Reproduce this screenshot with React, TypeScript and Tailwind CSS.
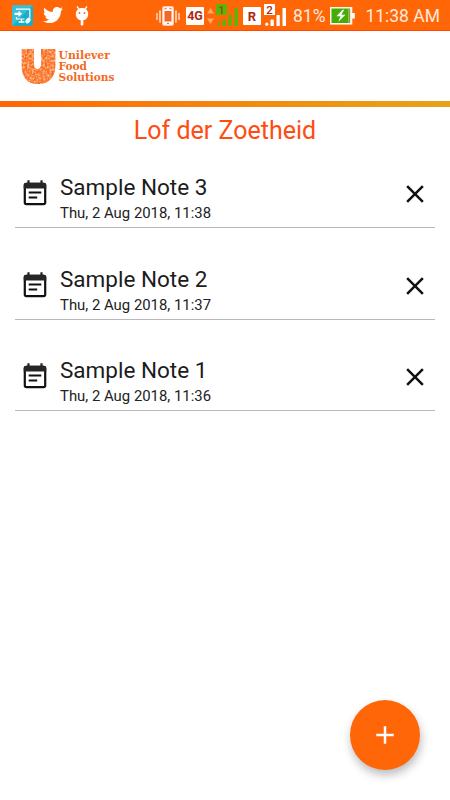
import React from 'react';
import { MdAdd, MdClose } from 'react-icons/md';
import { FaTwitter } from 'react-icons/fa';

interface Note {
  id: number;
  title: string;
  date: string;
}

const notes: Note[] = [
  { id: 3, title: 'Sample Note 3', date: 'Thu, 2 Aug 2018, 11:38' },
  { id: 2, title: 'Sample Note 2', date: 'Thu, 2 Aug 2018, 11:37' },
  { id: 1, title: 'Sample Note 1', date: 'Thu, 2 Aug 2018, 11:36' },
];

const U_SHAPE = 'M.7 0h12.300v15c0 3.500 1 5 3.500 5s3.500-1.500 3.500-5V0h14.300v17c0 11-6.300 18-17.300 18S.7 28 .7 17z';

const PcLinkIcon = () => (
  <svg width="21" height="21" viewBox="0 0 21 21" fill="none">
    <rect width="21" height="21" rx="1.5" fill="#18afc6" />
    <path d="M0 1.5A1.5 1.5 0 0 1 1.5 0H21L0 21z" fill="#38bfd2" />
    <path d="M4.500 5V4.200h13.300v8.500M4.500 12v2h8" stroke="#fff" strokeWidth="1.200" />
    <path d="M2.500 7.700h4V5.700l3.700 3.100-3.700 3.100V9.900h-4z" fill="#fff" />
    <path d="M9.500 14v2.500M6.500 17h6" stroke="#fff" strokeWidth="1.300" />
    <ellipse cx="16" cy="15.500" rx="2.200" ry="3.300" transform="rotate(35 16 15.500)" fill="#e8fbff" />
  </svg>
);

const DebugIcon = () => (
  <svg width="14" height="20" viewBox="0 0 14 20" fill="#fff">
    <path d="M2 .5 4 3.200M12 .5 10 3.200" stroke="#fff" strokeWidth="1.300" />
    <path d="M7 2C3 2 .8 4.700.8 8c0 3.700 2.700 6.500 6.200 6.500s6.200-2.800 6.200-6.500C13.200 4.700 11 2 7 2z" />
    <rect x="5.700" y="14" width="2.700" height="5.500" rx=".8" />
    <circle cx="4.500" cy="7" r=".9" fill="#ff6608" />
    <circle cx="9.500" cy="7" r=".9" fill="#ff6608" />
  </svg>
);

const VibrateIcon = () => (
  <svg width="24" height="20" viewBox="0 0 24 20" fill="none" stroke="#ffe9dc">
    <rect x="7" y="1" width="10" height="18" rx="1" strokeWidth="1.500" fill="#fff" />
    <rect x="8.500" y="5" width="7" height="10.500" fill="#f2672a" stroke="none" />
    <path d="M8.500 2.700h2M13.500 2.700h2M11 17.400h2" stroke="#e85b20" strokeWidth="1" />
    <path d="M4 4.500v12M20 4.500v12" strokeWidth="1.500" />
    <path d="M1 7v7M23 7v7" strokeWidth="1.300" />
  </svg>
);

const NetworkBadge = ({ label, className }: { label: string; className: string }) => (
  <span className={`flex h-[18px] items-center justify-center rounded-[1px] bg-white font-bold leading-none text-[#b02a12] ${className}`}>
    {label}
  </span>
);

const SignalIcon = ({ sim, color, box, digit }: { sim: string; color: string; box: string; digit: string }) => (
  <svg width="23" height="23" viewBox="0 0 23 23" fill={color}>
    <rect width="11" height="11" fill={box} />
    <text x="5.500" y="9.700" textAnchor="middle" fontSize="11.500" fontWeight="500" fill={digit}>{sim}</text>
    <circle cx="2.800" cy="20.200" r="1.600" />
    <rect x="6.500" y="15.500" width="3.300" height="6.500" rx=".5" />
    <rect x="12.500" y="11" width="3.300" height="11" rx=".5" />
    <rect x="18.500" y="4" width="3.500" height="18" rx=".5" />
  </svg>
);

const BatteryIcon = () => (
  <svg width="25" height="18" viewBox="0 0 25 18">
    <rect x=".8" y=".8" width="20.700" height="16" fill="#fff" stroke="#fff4ea" strokeWidth="1.600" />
    <rect x="22" y="6" width="2.800" height="5.500" fill="#fff" />
    <rect x="1.500" y="1.500" width="17" height="14.500" fill="#45ad08" />
    <rect x="18.500" y="1.500" width="1.700" height="14.500" fill="#8b9d35" />
    <path d="M12.500 2.800 6.500 9.300h4l-2.200 5.400 7.200-7h-4.200l3-4.900z" fill="#fff" />
  </svg>
);

const StatusBar = () => (
  <div className="flex h-[31px] shrink-0 items-center border-b border-[#ff4800] bg-[#ff6608] text-white">
    <div className="ml-3"><PcLinkIcon /></div>
    <FaTwitter className="ml-[10px]" size={20} />
    <div className="ml-[12px] mt-[2px]"><DebugIcon /></div>
    <div className="ml-[67px] mt-px"><VibrateIcon /></div>
    <NetworkBadge label="4G" className="ml-[6px] mt-[2px] w-[18px] text-[12.500px]" />
    <svg className="ml-[3px] mt-px" width="7" height="16" viewBox="0 0 7 16" fill="#ffa568">
      <path d="M3.500 0 7 5.500H0zM3.500 16 7 10.500H0z" />
    </svg>
    <div className="ml-[2px] mt-px"><SignalIcon sim="1" color="#5bb408" box="#5bb408" digit="#8d4d0b" /></div>
    <NetworkBadge label="R" className="ml-[4px] mt-[2px] w-[18px] text-[13px]" />
    <div className="ml-[3px] mt-px"><SignalIcon sim="2" color="#fff" box="#fff" digit="#b02a12" /></div>
    <span className="ml-[6px] mt-[3px] w-[34px] whitespace-nowrap text-[17.500px] leading-none text-[#ffe9dd]">81%</span>
    <div className="ml-[3px] mt-[2px]"><BatteryIcon /></div>
    <span className="ml-auto mr-[10px] mt-[3px] whitespace-nowrap text-[17.500px] leading-none text-[#ffe9dd]">11:38 AM</span>
  </div>
);

const Logo = () => (
  <svg className="overflow-visible" width="110" height="40" viewBox="0 0 110 40">
    <filter id="swirls" x="0" y="0" width="100%" height="100%" colorInterpolationFilters="sRGB">
      <feTurbulence type="fractalNoise" baseFrequency="0.45" numOctaves="2" seed="4" />
      <feColorMatrix values="0 0 0 0 0.98  0 0 0 0 0.43  0 0 0 0 0.12  3 0 0 0 -0.85" />
      <feComposite in2="SourceGraphic" operator="in" />
    </filter>
    <path d={U_SHAPE} fill="#fdb68c" />
    <path d={U_SHAPE} fill="#fb6d20" filter="url(#swirls)" />
    <g fill="#f46a20" fontFamily="'DejaVu Serif', serif" fontWeight="700" fontSize="11">
      <text x="37.500" y="9.500" textLength="51.500" lengthAdjust="spacingAndGlyphs">Unilever</text>
      <text x="37.500" y="20.700" textLength="28.500" lengthAdjust="spacingAndGlyphs">Food</text>
      <text x="37.500" y="32" textLength="56" lengthAdjust="spacingAndGlyphs">Solutions</text>
    </g>
  </svg>
);

const NoteIcon = () => (
  <svg className="mt-[12px] shrink-0" width="30" height="30" viewBox="0 0 30 30" fill="none">
    <rect x="4.800" y="4.800" width="20.400" height="20.400" rx="1.600" stroke="#111" strokeWidth="2.200" />
    <path d="M3.700 9.500V6A2.300 2.300 0 0 1 6 3.700h18A2.300 2.300 0 0 1 26.300 6v3.500z" fill="#262626" />
    <path d="M8.500 1.300v3M21.500 1.300v3" stroke="#222" strokeWidth="2.200" />
    <path d="M8.700 13.500h12.600M8.700 18.500h8.500" stroke="#111" strokeWidth="2.100" />
  </svg>
);

const NoteRow: React.FC<{ note: Note }> = ({ note }) => (
  <li className="flex h-[61px] items-start border-b border-[#b9b9b9] px-[5px]">
    <NoteIcon />
    <div className="ml-[10px] grow">
      <p className="mt-[5px] text-[22.500px] leading-[30px] text-[#1c1c1c]">{note.title}</p>
      <p className="mt-px text-[14.900px] leading-5 text-[#222]">{note.date}</p>
    </div>
    <button className="mt-[12px] shrink-0 text-[#111]" aria-label="Delete note">
      <MdClose size={30} />
    </button>
  </li>
);

const App: React.FC = () => {
  return (
    <div className="relative flex h-screen w-full flex-col overflow-hidden bg-white font-['Roboto',sans-serif]">
      <StatusBar />
      <header className="h-[70px] shrink-0 pl-[21px] pt-[18px]">
        <Logo />
      </header>
      <div className="h-[6px] shrink-0 bg-linear-to-r from-[#ff6505] to-[#e6a317]" />
      <h1 className="mt-[6px] text-center text-[25px] leading-9 text-[#ff4c10]">Lof der Zoetheid</h1>
      <ul className="mt-[18px] flex flex-col gap-[30.600px] px-[15px]">
        {notes.map((note) => (
          <NoteRow key={note.id} note={note} />
        ))}
      </ul>
      <button
        className="absolute bottom-[30px] right-[30px] flex h-[70px] w-[70px] items-center justify-center rounded-full bg-[#ff6608] text-white shadow-[1px_5px_10px_rgba(0,0,0,0.27)]"
        aria-label="Add note"
      >
        <MdAdd size={30} />
      </button>
    </div>
  );
};

export default App;
